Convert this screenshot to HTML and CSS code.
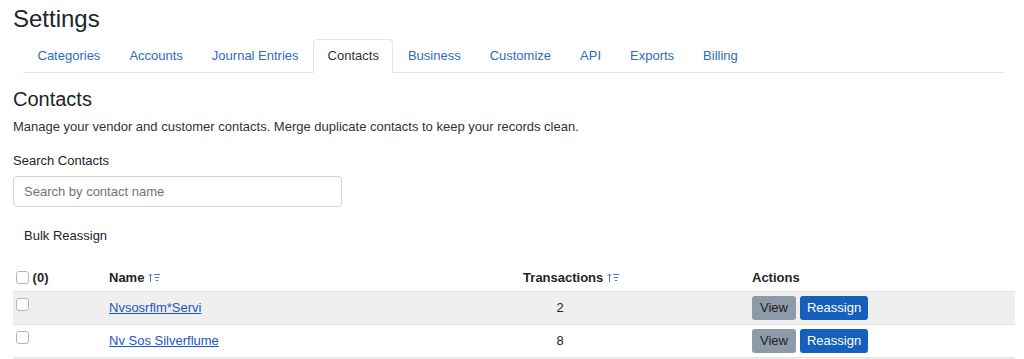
FILE: index.html
```html
<!DOCTYPE html>
<html lang="en">
<head>
    <meta charset="UTF-8">
    <meta name="viewport" content="width=device-width, initial-scale=1.0">
    <title>Settings - Contacts</title>
    <link rel="stylesheet" href="styles.css">
</head>
<body>
    <div class="page">
        <h1>Settings</h1>
        <ul class="tabs">
            <li><a href="#">Categories</a></li>
            <li><a href="#">Accounts</a></li>
            <li><a href="#">Journal Entries</a></li>
            <li><a href="#" class="active">Contacts</a></li>
            <li><a href="#">Business</a></li>
            <li><a href="#">Customize</a></li>
            <li><a href="#">API</a></li>
            <li><a href="#">Exports</a></li>
            <li><a href="#">Billing</a></li>
        </ul>

        <h2>Contacts</h2>
        <p class="lead">Manage your vendor and customer contacts. Merge duplicate contacts to keep your records clean.</p>

        <label class="search-label" for="search">Search Contacts</label>
        <input type="text" id="search" class="search-input" placeholder="Search by contact name">

        <button class="bulk">Bulk Reassign</button>

        <table class="contacts">
            <thead>
                <tr>
                    <th class="col-check"><span class="box"></span> (0)</th>
                    <th class="col-name">Name <svg class="sort" width="12" height="10" viewBox="0 0 12 10"><path d="M2.5 9V1.2M0.8 2.8L2.5 1 4.2 2.8" fill="none" stroke="currentColor" stroke-width="1"/><path d="M6 1.5h6M6.8 4.5h4.4M7.8 7.5h2.4" fill="none" stroke="currentColor" stroke-width="1"/></svg></th>
                    <th class="col-num">Transactions <svg class="sort" width="12" height="10" viewBox="0 0 12 10"><path d="M2.5 9V1.2M0.8 2.8L2.5 1 4.2 2.8" fill="none" stroke="currentColor" stroke-width="1"/><path d="M6 1.5h6M6.8 4.5h4.4M7.8 7.5h2.4" fill="none" stroke="currentColor" stroke-width="1"/></svg></th>
                    <th class="col-actions">Actions</th>
                </tr>
            </thead>
            <tbody>
                <tr class="striped">
                    <td class="col-check"><span class="box"></span></td>
                    <td><a href="#">Nvsosrflm*Servi</a></td>
                    <td class="num">2</td>
                    <td><div class="actions"><button class="btn view">View</button><button class="btn reassign">Reassign</button></div></td>
                </tr>
                <tr>
                    <td class="col-check"><span class="box"></span></td>
                    <td><a href="#">Nv Sos Silverflume</a></td>
                    <td class="num">8</td>
                    <td><div class="actions"><button class="btn view">View</button><button class="btn reassign">Reassign</button></div></td>
                </tr>
                <tr class="striped">
                    <td class="col-check"><span class="box"></span></td>
                    <td><a href="#">Nv Sos Silverflume</a></td>
                    <td class="num">1</td>
                    <td><div class="actions"><button class="btn view">View</button><button class="btn reassign">Reassign</button></div></td>
                </tr>
            </tbody>
        </table>
    </div>
</body>
</html>
```

FILE: styles.css
```css
body {
    font-family: "Liberation Sans", Arial, sans-serif;
    margin: 0;
    padding: 0;
    color: #212529;
    font-size: 13px;
    background-color: #fff;
}
.page {
    padding: 0 9px 0 13px;
}
h1 {
    font-size: 24px;
    font-weight: 500;
    line-height: 29px;
    margin: 4px 0 6px;
}
.tabs {
    display: flex;
    list-style: none;
    margin: 0 11px 0 10px;
    padding: 0;
    border-bottom: 1px solid #e4e6e8;
}
.tabs a {
    display: block;
    padding: 8px 13.5px;
    line-height: 16px;
    margin-bottom: -1px;
    border: 1px solid transparent;
    border-radius: 4px 4px 0 0;
    text-decoration: none;
    color: #2e6cc0;
    font-size: 13px;
}
.tabs a.active {
    color: #333;
    background-color: #fff;
    border-color: #e4e6e8 #e4e6e8 #fff;
}
h2 {
    font-size: 20px;
    font-weight: 500;
    line-height: 24px;
    margin: 14px 0 8px;
}
.lead {
    margin: 0 0 18px;
    color: #333;
    line-height: 16px;
}
.search-label {
    display: block;
    margin-bottom: 7px;
    line-height: 16px;
}
.search-input {
    display: block;
    box-sizing: border-box;
    width: 329px;
    height: 31px;
    padding: 6px 10px;
    font-family: inherit;
    font-size: 13px;
    border: 1px solid #d0d4d8;
    border-radius: 4px;
    color: #212529;
}
.search-input::placeholder {
    color: #6c757d;
}
.bulk {
    display: block;
    margin: 15px 0 16px;
    padding: 6px 11px;
    border: none;
    background: none;
    font-family: inherit;
    font-size: 13px;
    color: #212529;
    line-height: 16px;
}
.contacts {
    width: 1002px;
    table-layout: fixed;
    border-collapse: collapse;
}
.contacts th,
.contacts td {
    box-sizing: border-box;
}
.contacts th {
    text-align: left;
    font-weight: bold;
    padding: 4px 8px 4px;
    line-height: 16px;
    height: 25px;
}
.contacts td {
    padding: 4px 8px;
    height: 32px;
    line-height: 16px;
    border-top: 1px solid #e2e2e2;
    vertical-align: middle;
}
.contacts tr.striped td {
    background-color: #efefef;
}
.contacts .col-check {
    width: 88px;
    padding-left: 3px;
}
.contacts th.col-check {
    white-space: nowrap;
}
.contacts td.col-check {
    vertical-align: top;
    padding-top: 5px;
}
.contacts .col-name {
    width: 275px;
}
.contacts .col-num {
    width: 368px;
    text-align: center;
    padding-left: 30px;
}
.contacts .col-actions {
    width: 271px;
}
.contacts td.num {
    text-align: center;
}
.box {
    display: inline-block;
    width: 11px;
    height: 11px;
    border: 1px solid #b5b5b5;
    border-radius: 3px;
    background: #fff;
    vertical-align: -2px;
}
.sort {
    color: #4a78d6;
    vertical-align: -1px;
}
.contacts a {
    color: #1b55c9;
}
.actions {
    display: flex;
    gap: 4px;
}
.btn {
    font-family: inherit;
    font-size: 13px;
    line-height: 16px;
    padding: 3px 7px;
    border: 1px solid transparent;
    border-radius: 3px;
}
.btn.view {
    background-color: #8c9ba7;
    color: #222;
}
.btn.reassign {
    background-color: #1560ba;
    color: #fff;
    padding: 3px 6px;
}
```
